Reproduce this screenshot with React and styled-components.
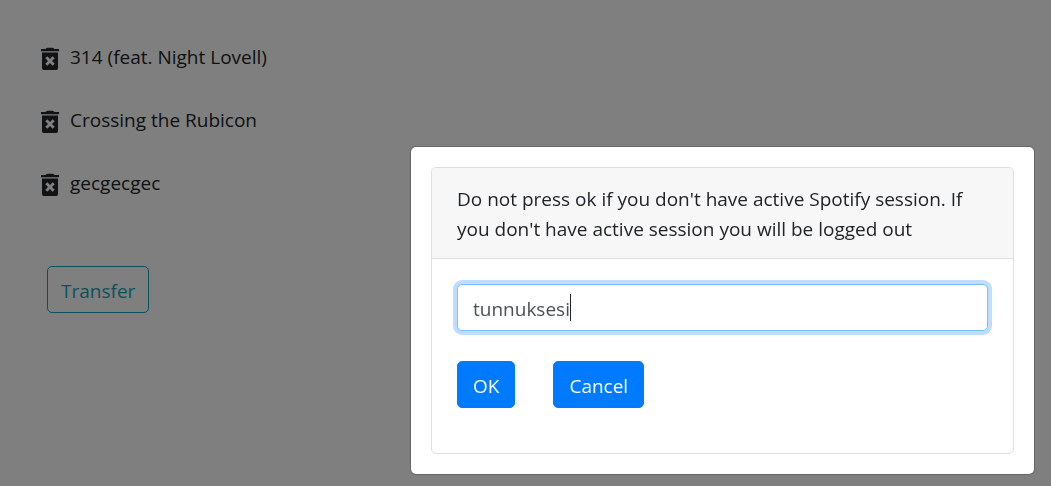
import React, { useState } from "react";
import styled, { createGlobalStyle } from "styled-components";

const GlobalStyle = createGlobalStyle`
  *, *::before, *::after { box-sizing: border-box; }
  body {
    margin: 0;
    background: #fff;
    color: #212529;
    font-family: "Segoe UI", "Open Sans", "Noto Sans", sans-serif;
    font-size: 19px;
    line-height: 30px;
  }
`;

const Page = styled.main`
  min-height: 100vh;
  padding: 42px 40px;
`;

const TrackList = styled.ul`
  list-style: none;
  margin: 0 0 68px;
  padding: 0;
  display: flex;
  flex-direction: column;
  gap: 33px;
`;

const TrackRow = styled.li`
  display: flex;
  align-items: center;
  gap: 10px;
`;

const IconButton = styled.button`
  display: flex;
  padding: 4px 0 0;
  border: 0;
  background: none;
  color: inherit;
  cursor: pointer;
`;

const Button = styled.button`
  height: 47px;
  padding: 2px ${(p) => (p.$outline ? 13 : 15)}px 0;
  border: 1px solid ${(p) => (p.$outline ? "#17a2b8" : "#007bff")};
  border-radius: 5px;
  background: ${(p) => (p.$outline ? "transparent" : "#007bff")};
  color: ${(p) => (p.$outline ? "#17a2b8" : "#fff")};
  font: inherit;
  cursor: pointer;
`;

const TransferArea = styled.div`
  padding-left: 7px;
`;

const Backdrop = styled.div`
  position: fixed;
  inset: 0;
  display: flex;
  justify-content: flex-end;
  align-items: flex-start;
  padding: 146px 16px 11px;
  background: rgba(0, 0, 0, 0.5);
`;

const Dialog = styled.div`
  width: 100%;
  max-width: 625px;
  padding: 20px;
  border: 1px solid rgba(0, 0, 0, 0.2);
  border-radius: 6px;
  background: #fff;
  background-clip: padding-box;
`;

const Card = styled.section`
  border: 1px solid #dfdfdf;
  border-radius: 5px;
  overflow: hidden;
`;

const CardHeader = styled.label`
  display: block;
  padding: 16px 25px 14px;
  border-bottom: 1px solid #dfdfdf;
  background: #f7f7f7;
`;

const CardBody = styled.form`
  padding: 25px 25px 45px;
`;

const Field = styled.div`
  position: relative;
  margin-bottom: 30px;
`;

const TextInput = styled.input`
  display: block;
  width: 100%;
  height: 47px;
  padding: 2px 15px 0;
  border: 1px solid #80bdff;
  border-radius: 5px;
  outline: 0;
  box-shadow: 0 0 0 4px #bfdeff;
  background: #fff;
  color: #495057;
  caret-color: transparent;
  font: inherit;
`;

const Caret = styled.span`
  position: absolute;
  top: 10px;
  left: 113px;
  width: 1px;
  height: 27px;
  background: #212529;
`;

const Actions = styled.div`
  display: flex;
  gap: 38px;
`;

function TrashIcon() {
  return (
    <svg width="20" height="24" viewBox="0 0 20 24" fill="currentColor" aria-hidden="true">
      <path d="M1 2h4.500Q6.500 .7 8 .7h4Q13.500 .7 14.500 2H19v2.200H1z" />
      <path
        fillRule="evenodd"
        d="M2 5.500h16v15.700a1.800 1.800 0 0 1-1.800 1.800H3.800a1.800 1.800 0 0 1-1.800-1.800zM7.300 9.200 5.300 11.200 8 14 5.300 16.800 7.300 18.800 10 16.100 12.700 18.800 14.700 16.800 12 14 14.700 11.200 12.700 9.200 10 11.900z"
      />
    </svg>
  );
}

const tracks = ["314 (feat. Night Lovell)", "Crossing the Rubicon", "gecgecgec"];

export default function App() {
  const [name, setName] = useState("tunnuksesi");
  return (
    <>
      <GlobalStyle />
      <Page>
        <TrackList>
          {tracks.map((track) => (
            <TrackRow key={track}>
              <IconButton type="button" aria-label={`Remove ${track}`}>
                <TrashIcon />
              </IconButton>
              <span>{track}</span>
            </TrackRow>
          ))}
        </TrackList>
        <TransferArea>
          <Button type="button" $outline>Transfer</Button>
        </TransferArea>
      </Page>
      <Backdrop>
        <Dialog role="dialog" aria-modal="true">
          <Card>
            <CardHeader htmlFor="account">
              Do not press ok if you don't have active Spotify session. If you don't have active session you will be logged out
            </CardHeader>
            <CardBody onSubmit={(e) => e.preventDefault()}>
              <Field>
                <TextInput id="account" type="text" value={name} onChange={(e) => setName(e.target.value)} />
                <Caret aria-hidden="true" />
              </Field>
              <Actions>
                <Button type="submit">OK</Button>
                <Button type="button">Cancel</Button>
              </Actions>
            </CardBody>
          </Card>
        </Dialog>
      </Backdrop>
    </>
  );
}
